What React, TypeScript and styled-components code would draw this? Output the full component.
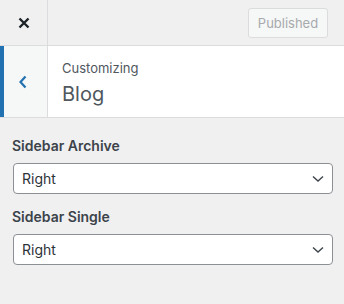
import React from 'react';
import styled, { createGlobalStyle } from 'styled-components';

const Global = createGlobalStyle`
  html, body {
    margin: 0;
    padding: 0;
    background: #f0f0f1;
  }
  body {
    font-family: Inter, "Liberation Sans", sans-serif;
    color: #1d2327;
  }
`;

const Panel = styled.div`
  width: 344px;
  height: 304px;
  background: #f0f0f1;
  display: flex;
  flex-direction: column;
`;

const Header = styled.div`
  height: 45px;
  display: flex;
  align-items: center;
  border-bottom: 1px solid #dcdcde;
`;

const CloseButton = styled.button`
  width: 48px;
  height: 45px;
  border: 0;
  border-right: 1px solid #dcdcde;
  background: transparent;
  display: flex;
  align-items: center;
  justify-content: center;
  padding: 0;
  color: #1d2327;
`;

const Actions = styled.div`
  flex: 1;
  display: flex;
  justify-content: flex-end;
  padding-right: 16px;
`;

const PublishButton = styled.button`
  width: 80px;
  height: 30px;
  border: 1px solid #dcdcde;
  border-radius: 3px;
  background: #f6f7f7;
  color: #a7aaad;
  font-family: inherit;
  font-size: 13px;
  padding: 0;
`;

const SectionHead = styled.div`
  height: 71px;
  display: flex;
  background: #fff;
  border-bottom: 1px solid #dcdcde;
`;

const BackButton = styled.button`
  width: 48px;
  border: 0;
  border-left: 4px solid #2271b1;
  border-right: 1px solid #dcdcde;
  background: #f6f7f7;
  display: flex;
  align-items: center;
  justify-content: center;
  padding: 0 5px 0 0;
  color: #2271b1;
`;

const Titles = styled.div`
  display: flex;
  flex-direction: column;
  padding: 12px 0 0 14px;
  color: #50575e;
`;

const Small = styled.span`
  font-size: 13px;
  line-height: 20px;
`;

const Big = styled.span`
  font-size: 20px;
  line-height: 28px;
  margin-top: 2px;
`;

const Controls = styled.div`
  display: flex;
  flex-direction: column;
  padding: 18px 11px 0 12px;
  gap: 13px;
`;

const Field = styled.div`
  display: flex;
  flex-direction: column;
  gap: 7px;
`;

const Label = styled.label`
  font-size: 14px;
  font-weight: 600;
  line-height: 20px;
  color: #3c434a;
`;

const Select = styled.div`
  height: 29px;
  margin-left: 1px;
  border: 1px solid #8c8f94;
  border-radius: 4px;
  background: #fff;
  display: flex;
  align-items: center;
  justify-content: space-between;
  padding: 0 8px 0 8px;
  font-size: 14px;
  color: #2c3338;
`;

const Chevron = () => (
  <svg width="12" height="8" viewBox="0 0 12 8">
    <path d="M1 1.5 L6 6 L11 1.5" fill="none" stroke="#3c434a" strokeWidth="1.4" />
  </svg>
);

function Dropdown({ value }: { value: string }) {
  return (
    <Select>
      <span>{value}</span>
      <Chevron />
    </Select>
  );
}

export default function App() {
  return (
    <>
      <Global />
      <Panel>
        <Header>
          <CloseButton aria-label="Close">
            <svg width="12" height="12" viewBox="0 0 12 12">
              <path d="M1.5 1.5 L10.5 10.5 M10.5 1.5 L1.5 10.5" stroke="#1d2327" strokeWidth="2.4" />
            </svg>
          </CloseButton>
          <Actions>
            <PublishButton disabled>Published</PublishButton>
          </Actions>
        </Header>
        <SectionHead>
          <BackButton aria-label="Back">
            <svg width="10" height="14" viewBox="0 0 10 14">
              <path d="M7.5 1.5 L2.5 7 L7.5 12.5" fill="none" stroke="#2271b1" strokeWidth="2.2" />
            </svg>
          </BackButton>
          <Titles>
            <Small>Customizing</Small>
            <Big>Blog</Big>
          </Titles>
        </SectionHead>
        <Controls>
          <Field>
            <Label>Sidebar Archive</Label>
            <Dropdown value="Right" />
          </Field>
          <Field>
            <Label>Sidebar Single</Label>
            <Dropdown value="Right" />
          </Field>
        </Controls>
      </Panel>
    </>
  );
}
